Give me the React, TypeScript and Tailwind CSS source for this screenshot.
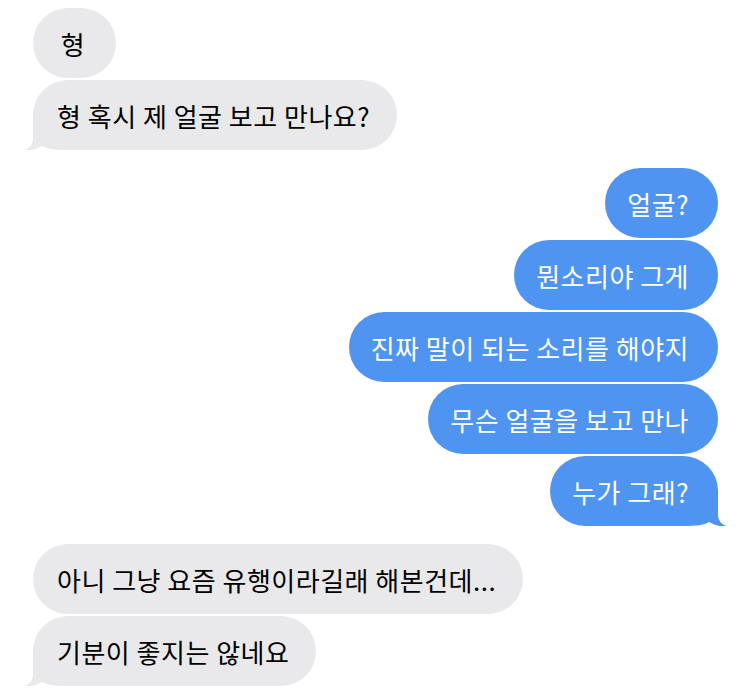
import React from 'react';

type Msg = { text: string; fromMe: boolean; tail?: boolean };

const groups: Msg[][] = [
  [
    { text: '형', fromMe: false },
    { text: '형 혹시 제 얼굴 보고 만나요?', fromMe: false, tail: true },
  ],
  [
    { text: '얼굴?', fromMe: true },
    { text: '뭔소리야 그게', fromMe: true },
    { text: '진짜 말이 되는 소리를 해야지', fromMe: true },
    { text: '무슨 얼굴을 보고 만나', fromMe: true },
    { text: '누가 그래?', fromMe: true, tail: true },
  ],
  [
    { text: '아니 그냥 요즘 유행이라길래 해본건데...', fromMe: false },
    { text: '기분이 좋지는 않네요', fromMe: false, tail: true },
  ],
];

const Tail = ({ fromMe }: { fromMe: boolean }) =>
  fromMe ? (
    <svg
      className="absolute right-[-10px] bottom-0"
      width="46"
      height="36"
      viewBox="-36 -36 46 36"
    >
      <path d="M0 -36 L0 -12 C0 -5 4 -1 9 0 C3 1 -4 -1 -9 -4 C-14 -1 -20 0 -36 0 L-36 -36 Z" fill="#4f94f0" />
    </svg>
  ) : (
    <svg
      className="absolute left-[-10px] bottom-0"
      width="46"
      height="36"
      viewBox="-10 -36 46 36"
    >
      <path d="M0 -36 L0 -12 C0 -5 -4 -1 -9 0 C-3 1 4 -1 9 -4 C14 -1 20 0 36 0 L36 -36 Z" fill="#e9e9eb" />
    </svg>
  );

const Bubble = ({ msg }: { msg: Msg }) => (
  <div className={`flex ${msg.fromMe ? 'justify-end' : 'justify-start'}`}>
    <div
      className={`relative h-[70px] min-w-[83px] rounded-[35px] flex items-center justify-center text-[26px] tracking-[0.5px] whitespace-nowrap ${
        msg.fromMe ? 'bg-[#4f94f0] text-white pl-[22px] pr-[29px]' : 'bg-[#e9e9eb] text-black pl-[24px] pr-[27px]'
      }`}
    >
      {msg.tail && <Tail fromMe={msg.fromMe} />}
      <span className="relative">{msg.text}</span>
    </div>
  </div>
);

export default function App() {
  return (
    <div
      className="w-[750px] h-[695px] bg-white pt-[8px] pl-[33px] pr-[32px] flex flex-col gap-[18px] overflow-hidden"
      style={{ fontFamily: '"Noto Sans CJK KR", "Noto Sans", sans-serif' }}
    >
      {groups.map((g, i) => (
        <div key={i} className="flex flex-col gap-[2px]">
          {g.map((m, j) => (
            <Bubble key={j} msg={m} />
          ))}
        </div>
      ))}
    </div>
  );
}
